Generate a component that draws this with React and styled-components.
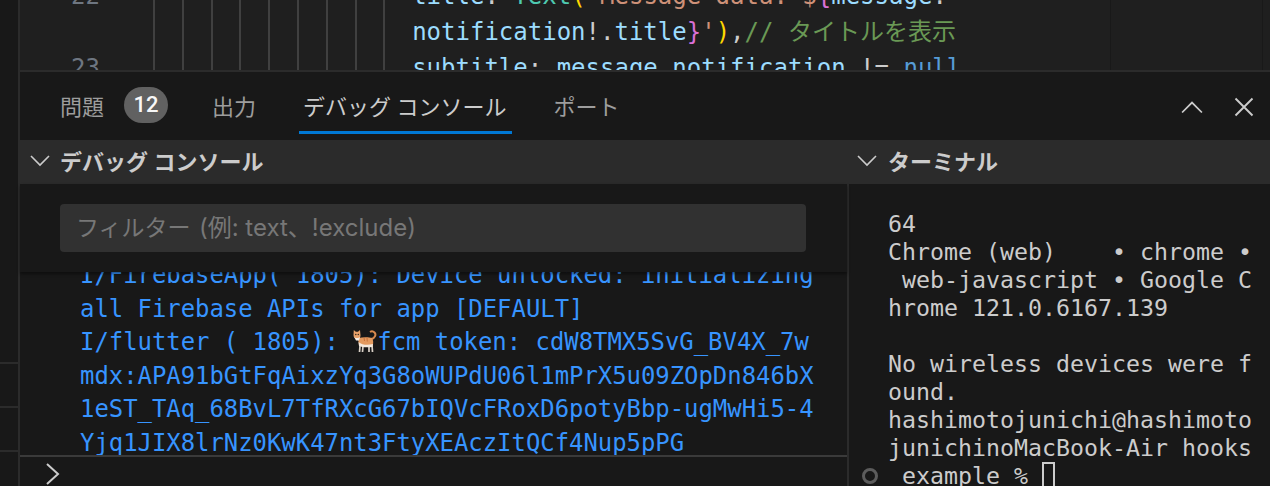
import React from 'react';
import styled, { createGlobalStyle } from 'styled-components';

const CJK = '"Noto Sans CJK JP"';
const MONO = `"DejaVu Sans Mono", ${CJK}, monospace`;
const UI = `Roboto, ${CJK}, sans-serif`;

const GUIDES = Array.from({ length: 9 }, (_, i) => i);
const TABS = [
  { id: 'problems', label: '問題', badge: '12' },
  { id: 'output', label: '出力' },
  { id: 'debug', label: 'デバッグ コンソール', active: true },
  { id: 'ports', label: 'ポート' },
];
const TERMINAL_LINES = [
  '64',
  'Chrome (web)    • chrome •',
  ' web-javascript • Google C',
  'hrome 121.0.6167.139',
  '',
  'No wireless devices were f',
  'ound.',
  'hashimotojunichi@hashimoto',
  'junichinoMacBook-Air hooks',
];

const Chevron = ({ dir = 'down', size = 20 }) => {
  const d = {
    down: 'M1 5 L10 14 L19 5',
    up: 'M1 15 L10 6 L19 15',
    right: 'M4 2 L15 12 L4 22',
  }[dir];
  const box = dir === 'right' ? 24 : 20;
  return (
    <svg width={size} height={size} viewBox={`0 0 ${box} ${box}`} fill="none">
      <path d={d} stroke="currentColor" strokeWidth={dir === 'right' ? 2 : 1.6} />
    </svg>
  );
};

const CatEmoji = () => (
  <CatBox width="24" height="24" viewBox="0 0 24 24" fill="none">
    <path d="M18.500 10 C22 9 23.500 5.500 21.500 3.500 C20.500 2.500 18.500 2 17 3" stroke="#d98a4e" strokeWidth="2" />
    <path d="M7 17 L6.500 23 M10 17 L9.500 23 M16 17 L16 23 M19 16 L19.500 23" stroke="#d9d0c6" strokeWidth="1.700" />
    <path d="M5 9 C10 8 16 8 19 9 C20.500 11 20.500 15 19.500 17 L6 16.500 Z" fill="#e39a5f" />
    <path d="M5.500 13 C9 16 15 16.500 20 15 L19.500 18 C14 18.500 9 18.500 6 17 Z" fill="#f3e9de" />
    <path d="M0.800 1 L2.800 2.800 L5 2.800 L7 1 L7.500 6.500 C7.500 9 5.500 10 4 10 C2 10 0.500 8.500 0.500 6 Z" fill="#e8a16a" />
    <path d="M1 7.500 C2 9.500 6 9.500 7.200 7.500 L6 11.500 L3 11.500 Z" fill="#f6efe7" />
    <circle cx="2.800" cy="5.500" r="0.700" fill="#2a2118" />
    <circle cx="5.300" cy="5.500" r="0.700" fill="#2a2118" />
    <path d="M11 8.500 L11.500 12 M14 8.500 L14.300 12.500" stroke="#c9713a" strokeWidth="1" />
  </CatBox>
);

const App = () => (
  <Window>
    <GlobalStyle />
    <SideStrip>
      <StripRow />
      <StripRow />
      <StripRow />
    </SideStrip>

    <Main>
      <Editor>
        <EditorBody>
          <CodeBlock>
            <LineNumber>22</LineNumber>
            <Guides>
              {GUIDES.map((i) => (
                <Guide key={i} />
              ))}
            </Guides>
            <Code>
              <Blue>title</Blue>
              <Plain>: </Plain>
              <Teal>Text</Teal>
              <Yellow>(</Yellow>
              <Str>'Message data: $</Str>
              <Pink>{'{'}</Pink>
              <Blue>message</Blue>
              <Plain>.</Plain>
              <br />
              <Blue>notification</Blue>
              <Plain>!.</Plain>
              <Blue>title</Blue>
              <Pink>{'}'}</Pink>
              <Str>'</Str>
              <Yellow>)</Yellow>
              <Plain>,</Plain>
              <Comment>// タイトルを表示</Comment>
            </Code>
          </CodeBlock>
          <CodeBlock>
            <LineNumber>23</LineNumber>
            <Guides>
              {GUIDES.map((i) => (
                <Guide key={i} />
              ))}
            </Guides>
            <Code>
              <Blue>subtitle</Blue>
              <Plain>: </Plain>
              <Blue>message</Blue>
              <Plain>.</Plain>
              <Blue>notification</Blue>
              <Plain> != </Plain>
              <Keyword>null</Keyword>
            </Code>
          </CodeBlock>
        </EditorBody>
        <Minimap />
      </Editor>

      <Panel>
        <TabBar>
          <Tabs>
            {TABS.map((t) => (
              <Tab key={t.id} $active={t.active}>
                {t.label}
                {t.badge && <Badge>{t.badge}</Badge>}
              </Tab>
            ))}
          </Tabs>
          <PanelActions>
            <ActionIcon>
              <Chevron dir="up" size={22} />
            </ActionIcon>
            <ActionIcon>
              <svg width="24" height="24" viewBox="0 0 24 24" fill="none">
                <path d="M3.500 3.500 L20.500 20.500 M20.500 3.500 L3.500 20.500" stroke="currentColor" strokeWidth="1.900" />
              </svg>
            </ActionIcon>
          </PanelActions>
        </TabBar>

        <Sections>
          <DebugSection>
            <SectionHeader>
              <Chevron />
              <SectionTitle>デバッグ コンソール</SectionTitle>
            </SectionHeader>
            <FilterBar>
              <FilterInput>
                フィルター <FilterHint>(例: text、!exclude)</FilterHint>
              </FilterInput>
            </FilterBar>
            <ConsoleOutput>
              <ConsoleText>
                I/FirebaseApp( 1805): Device unlocked: initializing
                {'\n'}all Firebase APIs for app [DEFAULT]
                {'\n'}I/flutter ( 1805): <CatEmoji />fcm token: cdW8TMX5SvG_BV4X_7w
                {'\n'}mdx:APA91bGtFqAixzYq3G8oWUPdU06l1mPrX5u09ZOpDn846bX
                {'\n'}1eST_TAq_68BvL7TfRXcG67bIQVcFRoxD6potyBbp-ugMwHi5-4
                {'\n'}Yjq1JIX8lrNz0KwK47nt3FtyXEAczItQCf4Nup5pPG
              </ConsoleText>
            </ConsoleOutput>
            <ReplRow>
              <Chevron dir="right" size={24} />
            </ReplRow>
          </DebugSection>

          <TerminalSection>
            <TerminalHeader>
              <Chevron />
              <SectionTitle>ターミナル</SectionTitle>
            </TerminalHeader>
            <TerminalBody>
              {TERMINAL_LINES.map((line, i) => (
                <TermLine key={i}>{line || ' '}</TermLine>
              ))}
              <TermLine>
                <PromptRing />
                {'_example % '}
                <TermCursor />
              </TermLine>
            </TerminalBody>
          </TerminalSection>
        </Sections>
      </Panel>
    </Main>
  </Window>
);

export default App;

const GlobalStyle = createGlobalStyle`
  html, body {
    margin: 0;
    padding: 0;
    background: #181818;
  }
`;

const Window = styled.div`
  display: flex;
  width: 1270px;
  height: 486px;
  overflow: hidden;
  background: #181818;
  font-family: ${UI};
`;

const SideStrip = styled.div`
  flex: 0 0 18px;
  padding-top: 320px;
  border-right: 2px solid #2b2b2b;
`;

const StripRow = styled.div`
  height: 42px;
  border-bottom: 2px solid #2b2b2b;
`;

const Main = styled.div`
  flex: 1;
  min-width: 0;
  display: flex;
  flex-direction: column;
`;

const Editor = styled.div`
  flex: 0 0 70px;
  display: flex;
  overflow: hidden;
  background: #1f1f1f;
`;

const EditorBody = styled.div`
  flex: 1;
  min-width: 0;
  margin-top: -22px;
`;

const CodeBlock = styled.div`
  display: flex;
`;

const LineNumber = styled.div`
  flex: 0 0 80px;
  height: 36px;
  line-height: 36px;
  text-align: right;
  margin-right: 53px;
  color: #6e7681;
  font-family: ${MONO};
  font-size: 24px;
`;

const Guides = styled.div`
  display: flex;
`;

const Guide = styled.div`
  width: 28.8px;
  box-sizing: border-box;
  border-left: 2px solid #404040;
`;

const Code = styled.div`
  font-family: ${MONO};
  font-size: 24px;
  line-height: 36px;
  white-space: pre;
`;

const Blue = styled.span`
  color: #9cdcfe;
`;

const Plain = styled.span`
  color: #cccccc;
`;

const Teal = styled.span`
  color: #4ec9b0;
`;

const Yellow = styled.span`
  color: #ffd700;
`;

const Str = styled.span`
  color: #ce9178;
`;

const Pink = styled.span`
  color: #da70d6;
`;

const Comment = styled.span`
  color: #6a9955;
`;

const Keyword = styled.span`
  color: #569cd6;
`;

const Minimap = styled.div`
  flex: 0 0 151px;
  margin-right: 7px;
  border-left: 1px solid #191919;
  border-right: 1px solid #191919;
`;

const Panel = styled.div`
  flex: 1;
  min-height: 0;
  display: flex;
  flex-direction: column;
  border-top: 2px solid #2b2b2b;
`;

const TabBar = styled.div`
  flex: 0 0 68px;
  display: flex;
  justify-content: space-between;
  align-items: center;
  padding: 0 14px 0 38px;
`;

const Tabs = styled.div`
  display: flex;
  gap: 40px;
  height: 100%;
`;

const Tab = styled.div`
  display: flex;
  align-items: center;
  gap: 20px;
  height: 62px;
  margin-left: ${(p) => (p.$active ? '1px' : '0')};
  padding: 6px ${(p) => (p.$active ? '5px' : '2px')} 0 ${(p) => (p.$active ? '4px' : '2px')};
  box-sizing: border-box;
  font-size: 22px;
  color: ${(p) => (p.$active ? '#cccccc' : '#9d9d9d')};
  border-bottom: 3px solid ${(p) => (p.$active ? '#0078d4' : 'transparent')};
`;

const Badge = styled.span`
  display: flex;
  align-items: center;
  justify-content: center;
  width: 44px;
  height: 36px;
  border-radius: 18px;
  background: #616161;
  color: #f8f8f8;
  font-size: 22px;
  font-weight: 500;
`;

const PanelActions = styled.div`
  display: flex;
  gap: 28px;
  margin-top: 2px;
  color: #cccccc;
`;

const ActionIcon = styled.div`
  display: flex;
  justify-content: center;
  align-items: center;
  width: 24px;
  height: 24px;
`;

const Sections = styled.div`
  flex: 1;
  min-height: 0;
  display: flex;
`;

const DebugSection = styled.div`
  flex: 0 0 827px;
  min-width: 0;
  display: flex;
  flex-direction: column;
  border-right: 2px solid #2b2b2b;
`;

const TerminalSection = styled.div`
  flex: 1;
  min-width: 0;
  display: flex;
  flex-direction: column;
`;

const SectionHeader = styled.div`
  flex: 0 0 44px;
  box-sizing: border-box;
  display: flex;
  align-items: center;
  gap: 10px;
  padding: 0 0 2px 10px;
  background: #2b2b2b;
  color: #cccccc;
`;

const TerminalHeader = styled(SectionHeader)`
  gap: 11px;
  padding-left: 8px;
`;

const SectionTitle = styled.span`
  margin-top: -2px;
  font-size: 22px;
  font-weight: 700;
`;

const FilterBar = styled.div`
  position: relative;
  z-index: 1;
  flex: 0 0 88px;
  box-sizing: border-box;
  padding: 20px 41px 20px 40px;
  background: #181818;
  box-shadow: 0 2px 3px rgba(0, 0, 0, 0.45);
`;

const FilterInput = styled.div`
  height: 48px;
  line-height: 48px;
  padding-left: 16px;
  border-radius: 4px;
  background: #313131;
  color: #777777;
  font-size: 23px;
  font-family: "Liberation Sans", ${CJK}, sans-serif;
`;

const FilterHint = styled.span`
  margin-left: 2px;
  font-size: 24px;
  font-family: Inter, ${CJK}, sans-serif;
`;

const ConsoleOutput = styled.div`
  flex: 1;
  min-height: 0;
  overflow: hidden;
`;

const ConsoleText = styled.pre`
  margin: -13px 0 0;
  padding-left: 60px;
  font-family: ${MONO};
  font-size: 23.9px;
  line-height: 33.5px;
  color: #3794ff;
`;

const CatBox = styled.svg`
  display: inline-block;
  vertical-align: -3px;
`;

const ReplRow = styled.div`
  flex: 0 0 26px;
  box-sizing: border-box;
  display: flex;
  align-items: flex-start;
  padding: 5px 0 0 23px;
  border-top: 2px solid #3a3a3a;
  color: #cccccc;
`;

const TerminalBody = styled.div`
  padding: 26px 0 0 39px;
`;

const TermLine = styled.div`
  position: relative;
  height: 28px;
  line-height: 28px;
  white-space: pre;
  font-family: ${MONO};
  font-size: 23.25px;
  color: #cccccc;
`;

const PromptRing = styled.span`
  position: absolute;
  left: -26px;
  top: 6px;
  width: 16px;
  height: 16px;
  box-sizing: border-box;
  border: 3px solid #5c5c5c;
  border-radius: 50%;
`;

const TermCursor = styled.span`
  display: inline-block;
  width: 13px;
  height: 28px;
  box-sizing: border-box;
  border: 2px solid #cccccc;
  vertical-align: top;
`;
